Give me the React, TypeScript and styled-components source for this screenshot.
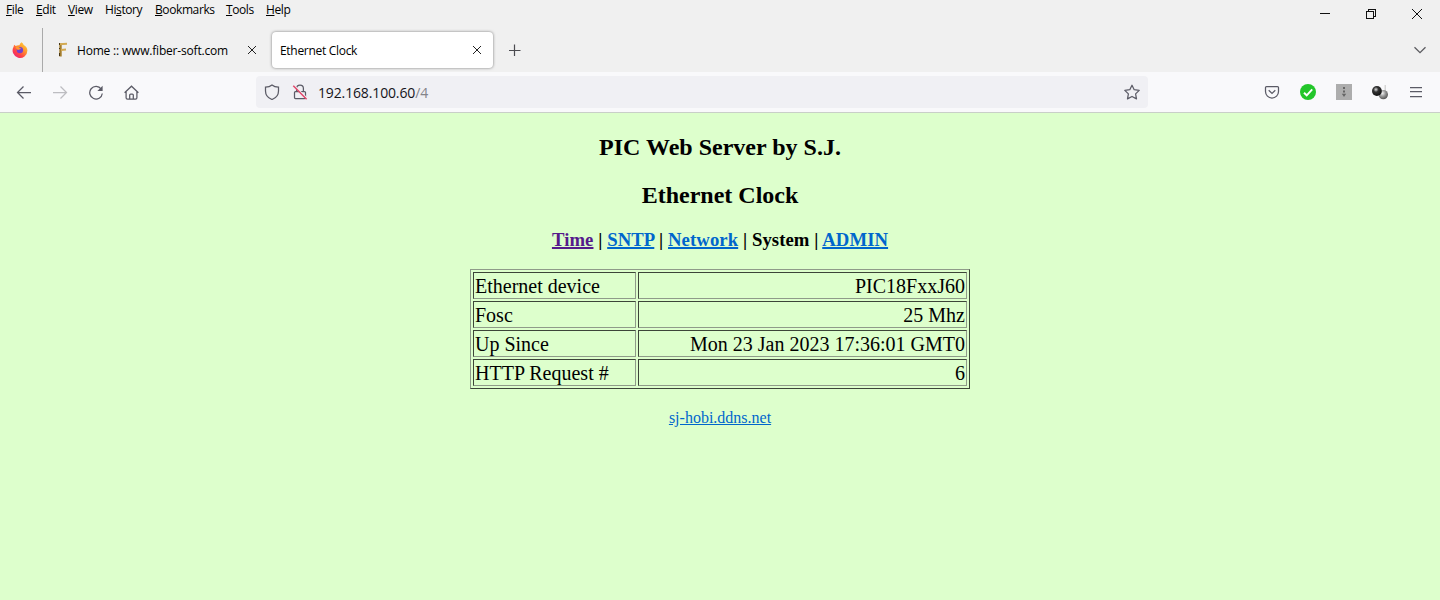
import {Fragment, ReactNode} from 'react'
import styled, {createGlobalStyle} from 'styled-components'

const menus: Menu[] = [
  {label: 'File', accessKey: 0, width: 18},
  {label: 'Edit', accessKey: 0, width: 20},
  {label: 'View', accessKey: 0, width: 25},
  {label: 'History', accessKey: 2, width: 38},
  {label: 'Bookmarks', accessKey: 0, width: 59},
  {label: 'Tools', accessKey: 0, width: 28},
  {label: 'Help', accessKey: 0, width: 26},
]

const links: PageLink[] = [
  {label: 'Time', href: '#0', visited: true},
  {label: 'SNTP', href: '#2'},
  {label: 'Network', href: '#3'},
  {label: 'System'},
  {label: 'ADMIN', href: '#5'},
]

const rows = [
  ['Ethernet device', 'PIC18FxxJ60'],
  ['Fosc', '25 Mhz'],
  ['Up Since', 'Mon 23 Jan 2023 17:36:01 GMT0'],
  ['HTTP Request #', '6'],
]

function App() {
  return (
    <Window>
      <GlobalStyle />
      <TitleBar>
        <MenuBar>
          {menus.map(menu => (
            <MenuItem key={menu.label} $width={menu.width}>
              {menu.label.slice(0, menu.accessKey)}
              <u>{menu.label[menu.accessKey]}</u>
              {menu.label.slice(menu.accessKey + 1)}
            </MenuItem>
          ))}
        </MenuBar>
        <WindowButtons>
          <WindowButton>
            <Icon size={12} crisp>
              <path d="M1 5.5h10" />
            </Icon>
          </WindowButton>
          <WindowButton>
            <Icon size={12} crisp>
              <path d="M1.5 3.5h7v7h-7zM3.5 3.5v-2h7v7h-2" />
            </Icon>
          </WindowButton>
          <WindowButton>
            <Icon size={12}>
              <path d="M1 1l10 10M11 1L1 11" />
            </Icon>
          </WindowButton>
        </WindowButtons>
      </TitleBar>

      <TabStrip>
        <PinnedTab>
          <FirefoxLogo />
        </PinnedTab>
        <Tab>
          <FiberIcon />
          <TabTitle $spacing={-0.19}>Home :: www.fiber-soft.com</TabTitle>
          <CloseIcon />
        </Tab>
        <Tab $active>
          <TabTitle $spacing={-0.3}>Ethernet Clock</TabTitle>
          <CloseIcon />
        </Tab>
        <NewTab>
          <Icon size={12} color="#4b4b50">
            <path d="M5.500 .5v12M0 6.500h11.500" strokeWidth="1.200" />
          </Icon>
        </NewTab>
        <AllTabs>
          <Icon size={12} color="#5b5b60">
            <path d="M.5 3.300L6 8.700l5.500-5.400" strokeWidth="1.300" />
          </Icon>
        </AllTabs>
      </TabStrip>

      <Toolbar>
        <NavButtons>
          <Icon>
            <path d="M15 8.500H1.500M7.500 2.500l-6 6 6 6" />
          </Icon>
          <Icon color="#bdbdc1">
            <path d="M1 8.500h13.500M8.500 2.500l6 6-6 6" />
          </Icon>
          <Icon>
            <path d="M13.200 5.100A6.300 6.300 0 1 0 14.300 9.500" />
            <path d="M14.600 1.700v5.200H9.400z" fill="#5b5b66" stroke="none" />
          </Icon>
          <Icon>
            <path d="M.6 8.800L7.500 2.200l6.900 6.600M2.100 7.500v6.300q0 1.400 1.400 1.400h8q1.400 0 1.400-1.400V7.500" />
            <path d="M5.700 15v-4q0-1 1-1h1.600q1 0 1 1v4" />
          </Icon>
        </NavButtons>
        <UrlBar>
          <Icon>
            <path d="M8 1C6.200 2.500 4 3.100 1.500 3.200V7c0 4 2.500 7 6.500 8.500C12 14 14.500 11 14.500 7V3.200C12 3.100 9.800 2.500 8 1z" />
          </Icon>
          <Icon>
            <path d="M4.600 7V4.600a3.400 3.400 0 0 1 6.800 0V7M3.500 7.500h9q1 0 1 1v5q0 1-1 1h-9q-1 0-1-1v-5q0-1 1-1z" />
            <path d="M2.200 1.500l13.300 13.400" stroke="#f0f0f4" strokeWidth="1.600" />
            <path d="M1.300 1.800l13.300 13.400" stroke="#e2476a" strokeWidth="1.500" />
          </Icon>
          <Url>
            192.168.100.60<span>/4</span>
          </Url>
          <Icon>
            <path
              d="M8 1.200l2.200 4.500 5 .7-3.600 3.500.9 5-4.500-2.400-4.500 2.400.9-5L.8 6.400l5-.7z"
              strokeLinejoin="round"
            />
          </Icon>
        </UrlBar>
        <Extensions>
          <Icon>
            <path d="M2.500 2.500h11q1 0 1 1v4a6.500 6.500 0 0 1-13 0v-4q0-1 1-1z" />
            <path d="M4.700 6.200L8 9.400l3.300-3.200" />
          </Icon>
          <Icon>
            <circle cx="8" cy="8" r="8" fill="#23c62a" stroke="none" />
            <path d="M4 8.700l2.700 2.600 5.500-6" stroke="#fff" strokeWidth="1.900" />
          </Icon>
          <Icon>
            <path d="M0 0h16v16H0z" fill="#adadad" stroke="none" />
            <path
              d="M7 3h2v2H7zM7 6.500h2v2H7zM5.800 9.800h4.400L8 13z"
              fill="#666"
              stroke="none"
            />
          </Icon>
          <SpheresIcon />
          <Icon>
            <path d="M2 3.500h12M2 7.500h12M2 12.500h12" />
          </Icon>
        </Extensions>
      </Toolbar>

      <Page>
        <Heading>PIC Web Server by S.J.</Heading>
        <Heading>Ethernet Clock</Heading>
        <PageNav>
          {links.map((link, i) => (
            <Fragment key={link.label}>
              {i > 0 && ' | '}
              {link.href ? (
                <Link href={link.href} $visited={link.visited}>
                  {link.label}
                </Link>
              ) : (
                link.label
              )}
            </Fragment>
          ))}
        </PageNav>
        <Table>
          <tbody>
            {rows.map(([name, value]) => (
              <tr key={name}>
                <NameCell>{name}</NameCell>
                <ValueCell>{value}</ValueCell>
              </tr>
            ))}
          </tbody>
        </Table>
        <Footer>
          <Link href="#home">sj-hobi.ddns.net</Link>
        </Footer>
      </Page>
    </Window>
  )
}

function Icon({size = 16, color, crisp, children}: IconProps) {
  return (
    <svg
      width={size}
      height={size}
      viewBox={`0 0 ${size} ${size}`}
      fill="none"
      stroke={color ?? (size === 16 ? '#5b5b66' : '#111')}
      strokeWidth={size === 16 ? 1.25 : 1}
      shapeRendering={crisp ? 'crispEdges' : undefined}
    >
      {children}
    </svg>
  )
}

function CloseIcon() {
  return (
    <Icon size={12} color="#222">
      <path d="M2 2l8 8M10 2l-8 8" />
    </Icon>
  )
}

function FirefoxLogo() {
  return (
    <svg width="16" height="16" viewBox="0 0 16 16">
      <defs>
        <linearGradient id="flame" x1="1" y1="0" x2="0.2" y2="1">
          <stop offset="0" stopColor="#ffe245" />
          <stop offset="0.4" stopColor="#ff9a2c" />
          <stop offset="0.75" stopColor="#ff4048" />
          <stop offset="1" stopColor="#e8247c" />
        </linearGradient>
      </defs>
      <path
        d="M9.500.3c1.200.8 1.900 1.700 2.200 2.600 2.200 1 3.700 3 3.700 5.600A7.400 7.400 0 1 1 1.600 4.800l.5-2.100 1.600 1.200c1.200-.7 2.500-.9 3.700-.7C7.800 2 8.500 1 9.500.3z"
        fill="url(#flame)"
      />
      <circle cx="7.900" cy="8.100" r="3.200" fill="#7440cf" />
      <path d="M3.500 4.300c1.500-.4 3.300.2 4.100 1.500L9 6.500c-.4.900-1.400 1-2.300 1.300-1.400.6-1.500-.9-2.700-1.500z" fill="#ff982d" />
    </svg>
  )
}

// Bamboo-like letter mark used as the site's favicon
function FiberIcon() {
  return (
    <svg width="16" height="16" viewBox="0 0 16 16" fill="none">
      <path d="M5.500 1.500v13" stroke="#a37c2c" strokeWidth="2.400" />
      <path d="M4 2.200l8-.4M6 8l5-.5" stroke="#d3aa52" strokeWidth="2" />
      <path d="M4.500 1v2M4.500 6v1M4.500 11v3" stroke="#473613" />
    </svg>
  )
}

function SpheresIcon() {
  return (
    <svg width="16" height="16" viewBox="0 0 16 16">
      <defs>
        <radialGradient id="dark" cx="0.4" cy="0.35" r="0.65">
          <stop offset="0" stopColor="#ddd" />
          <stop offset="0.4" stopColor="#333" />
          <stop offset="1" stopColor="#111" />
        </radialGradient>
        <radialGradient id="light" cx="0.4" cy="0.35" r="0.65">
          <stop offset="0" stopColor="#f4f4f4" />
          <stop offset="0.5" stopColor="#999" />
          <stop offset="1" stopColor="#555" />
        </radialGradient>
      </defs>
      <path d="M12.500 1h1.500v9h-1.500z" fill="#d5d5d5" />
      <circle cx="11.300" cy="10.600" r="4.700" fill="url(#light)" />
      <circle cx="4.900" cy="7" r="4.900" fill="url(#dark)" />
    </svg>
  )
}

const GlobalStyle = createGlobalStyle`
  body {
    margin: 0;
  }
`

const Window = styled.div`
  display: flex;
  flex-direction: column;
  height: 600px;
  overflow: hidden;
  background-color: #f0f0f0;
  font-family: 'Open Sans', 'Noto Sans', sans-serif;
  color: #000;

  svg {
    display: block;
    flex: none;
  }
`

const TitleBar = styled.div`
  display: flex;
  justify-content: space-between;
  height: 28px;
`

const MenuBar = styled.div`
  display: flex;
  gap: 12px;
  padding-left: 6px;
  font-size: 12px;
  line-height: 20px;
`

const MenuItem = styled.span<{$width: number}>`
  width: ${({$width}) => $width}px;
  white-space: nowrap;
  letter-spacing: -0.4px;

  u {
    text-underline-offset: 1px;
  }
`

const WindowButtons = styled.div`
  display: flex;
`

const WindowButton = styled.div`
  display: flex;
  align-items: center;
  justify-content: center;
  width: 46px;
  height: 28px;
`

const TabStrip = styled.div`
  display: flex;
  align-items: center;
  height: 44px;
`

const PinnedTab = styled.div`
  box-sizing: border-box;
  display: flex;
  align-items: center;
  width: 43px;
  height: 100%;
  padding-left: 12px;
  border-right: 1px solid #aaa;
`

const Tab = styled.div<{$active?: boolean}>`
  box-sizing: border-box;
  display: flex;
  align-items: center;
  gap: 6px;
  width: ${({$active}) => ($active ? 221 : 217)}px;
  height: 36px;
  margin-left: ${({$active}) => ($active ? 12 : 0)}px;
  padding: ${({$active}) => ($active ? '0 10px 0 8px' : '0 2px 0 12px')};
  border-radius: 4px;
  background-color: ${({$active}) => ($active ? '#fff' : 'transparent')};
  box-shadow: ${({$active}) => ($active ? '0 0 3px rgba(0, 0, 0, 0.5)' : 'none')};
`

const TabTitle = styled.span<{$spacing: number}>`
  flex: 1;
  font-size: 12px;
  letter-spacing: ${({$spacing}) => $spacing}px;
  white-space: nowrap;
`

const NewTab = styled.div`
  margin-left: 16px;
`

const AllTabs = styled.div`
  margin-left: auto;
  padding-right: 14px;
`

const Toolbar = styled.div`
  box-sizing: border-box;
  display: flex;
  align-items: center;
  height: 41px;
  border-bottom: 1px solid #c9cfc8;
  background-color: #f9f9fb;
`

const NavButtons = styled.div`
  display: flex;
  gap: 20px;
  width: 240px;
  padding-left: 16px;
`

const UrlBar = styled.div`
  box-sizing: border-box;
  display: flex;
  align-items: center;
  gap: 12px;
  width: 892px;
  height: 32px;
  padding: 0 8px;
  border-radius: 4px;
  background-color: #f0f0f4;
`

const Url = styled.span`
  flex: 1;
  margin-left: -2px;
  padding-top: 1px;
  font-size: 14px;
  letter-spacing: -0.14px;
  color: #15141a;

  span {
    color: #84848a;
  }
`

const Extensions = styled.div`
  display: flex;
  gap: 20px;
  margin-left: auto;
  padding-right: 16px;
`

const Page = styled.main`
  display: flex;
  flex: 1;
  flex-direction: column;
  align-items: center;
  background-color: #dfc;
  font-family: 'Liberation Serif', 'Times New Roman', serif;
`

const Heading = styled.h2`
  margin: 20px 0 0;
  font-size: 24px;
  line-height: 28px;
`

const PageNav = styled.h3`
  margin: 20px 0 18px;
  font-size: 18.72px;
  line-height: 22px;
  letter-spacing: 0.08px;

  a {
    text-decoration-thickness: 2px;
  }
`

const Link = styled.a<{$visited?: boolean}>`
  color: ${({$visited}) => ($visited ? '#551a8b' : '#0066cc')};
`

const Table = styled.table`
  width: 500px;
  border: 1px solid;
  border-color: #8f9b89 #3c4538 #3c4538 #8f9b89;
  border-spacing: 2px;
  font-size: 20px;
  line-height: 23px;
`

const NameCell = styled.td`
  box-sizing: border-box;
  width: 163px;
  padding: 2px 1px 0;
  border: 1px solid;
  border-color: #3c4538 #8f9b89 #8f9b89 #3c4538;
`

const ValueCell = styled(NameCell)`
  width: auto;
  text-align: right;
`

const Footer = styled.div`
  margin-top: 19px;
  font-size: 16px;
  line-height: 20px;
`

export default App

interface Menu {
  label: string
  accessKey: number
  width: number
}

interface PageLink {
  label: string
  href?: string
  visited?: boolean
}

interface IconProps {
  size?: number
  color?: string
  crisp?: boolean
  children: ReactNode
}
